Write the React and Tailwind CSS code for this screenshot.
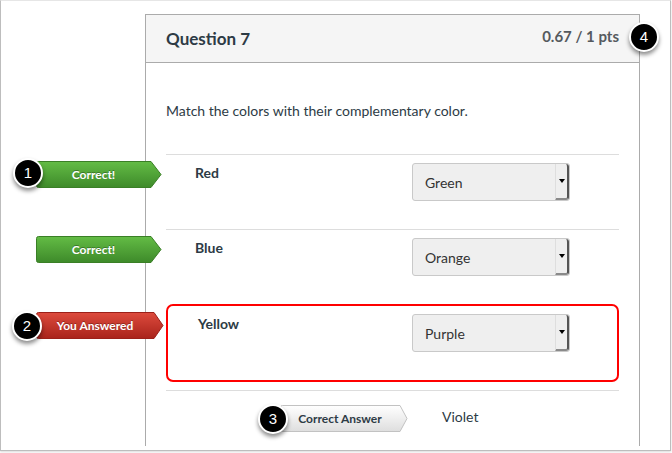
import React from "react";

// Callout number bubble
function Bubble({ n, className }) {
  return (
    <div
      className={
        "absolute w-[30px] h-[30px] rounded-full bg-black border-2 border-white shadow-[0_3px_4px_rgba(0,0,0,0.45)] flex items-center justify-center text-white text-[15px] font-['Liberation_Sans',sans-serif] " +
        className
      }
    >
      {n}
    </div>
  );
}

// Arrow-shaped tag drawn as svg, label on top
function Tag({ id, width, body, top, bottom, stroke, label, textColor, className, textClass }) {
  return (
    <div className={"absolute h-[27px] " + className} style={{ width }}>
      <svg width={width} height="27" className="absolute left-0 top-0">
        <defs>
          <linearGradient id={id} x1="0" y1="0" x2="0" y2="1">
            <stop offset="0" stopColor={top} />
            <stop offset="1" stopColor={bottom} />
          </linearGradient>
        </defs>
        <path
          d={`M0.5 2.5 Q0.5 0.5 2.5 0.5 H${body} L${width - 1} 13.5 L${body} 26.5 H2.5 Q0.5 26.5 0.5 24.5 Z`}
          fill={`url(#${id})`}
          stroke={stroke}
        />
      </svg>
      <div
        className={"relative flex items-center justify-center h-[27px] text-[12px] font-bold " + textClass}
        style={{ width: body, color: textColor }}
      >
        {label}
      </div>
    </div>
  );
}

function Select({ value }) {
  return (
    <div className="flex w-[158px] h-[38px] rounded-[3px] border border-[#c9c9c9] bg-[#efefef]">
      <div className="flex-1 flex items-center pl-[12px] text-[14px] text-[#333]">{value}</div>
      <div className="w-[14px] flex items-center justify-center border-l border-l-[#dedede] border-r-2 border-r-[#555] border-b-2 border-b-[#8a8a8a] rounded-r-[3px]">
        <div className="w-0 h-0 border-l-[3px] border-r-[3px] border-t-[4px] border-l-transparent border-r-transparent border-t-black"></div>
      </div>
    </div>
  );
}

function AnswerRow({ label, value }) {
  return (
    <div className="h-[75px] border-t border-[#dddddd] pt-[8px] grid grid-cols-[246px_158px]">
      <div className="pl-[29px] leading-[20px] text-[14px] font-bold text-[#2d3b45]">{label}</div>
      <Select value={value} />
    </div>
  );
}

export default function App() {
  return (
    <div className="relative w-[672px] h-[453px] overflow-hidden bg-white font-['Lato',sans-serif]">
      <div className="w-[671px] h-[451px] border border-[#bdbdbd] border-t-[#e6e6e6] shadow-[0_1px_2px_rgba(0,0,0,0.15)]">
        <div className="ml-[144px] mt-[13px] w-[495px] h-[432px] border-x border-t border-[#ababab] overflow-hidden">
          <div className="h-[48px] bg-[#f5f5f5] border-b border-[#ababab] flex items-center justify-between px-[20px]">
            <div className="text-[17px] font-bold text-[#2d3b45]">Question 7</div>
            <div className="text-[15px] font-bold text-[#555a5e] -mt-[4px]">0.67 / 1 pts</div>
          </div>
          <div className="px-[20px]">
            <div className="pt-[38px] pb-[33px] text-[14px] leading-[20px] text-[#2d3b45]">
              Match the colors with their complementary color.
            </div>
            <AnswerRow label="Red" value="Green" />
            <AnswerRow label="Blue" value="Orange" />
            <div className="h-[78px] border-2 border-[#ff0000] rounded-[7px] pt-[8px] grid grid-cols-[244px_158px]">
              <div className="pl-[30px] leading-[20px] text-[14px] font-bold text-[#2d3b45]">Yellow</div>
              <Select value="Purple" />
            </div>
            <div className="mt-[8px] border-t border-[#dddddd] pt-[16px] pl-[276px] text-[14px] leading-[20px] text-[#2d3b45]">
              Violet
            </div>
          </div>
        </div>
      </div>

      <Tag id="g1" width={126} body={115} top="#63bc45" bottom="#3e8a2a" stroke="#3a7f26" label="Correct!" textColor="#fff" className="left-[36px] top-[161px]" textClass="[text-shadow:0_-1px_0_rgba(0,0,0,0.3)]" />
      <Tag id="g2" width={126} body={115} top="#63bc45" bottom="#3e8a2a" stroke="#3a7f26" label="Correct!" textColor="#fff" className="left-[36px] top-[236px]" textClass="[text-shadow:0_-1px_0_rgba(0,0,0,0.3)]" />
      <Tag id="r1" width={128} body={118} top="#dd4b3d" bottom="#a9231b" stroke="#9c2019" label="You Answered" textColor="#fff" className="left-[36px] top-[312px]" textClass="[text-shadow:0_-1px_0_rgba(0,0,0,0.3)]" />
      <Tag id="c1" width={128} body={120} top="#ffffff" bottom="#dedede" stroke="#c2c2c2" label="Correct Answer" textColor="#2d3b45" className="left-[280px] top-[405px]" textClass="" />

      <Bubble n="1" className="left-[13px] top-[158px]" />
      <Bubble n="2" className="left-[12px] top-[311px]" />
      <Bubble n="3" className="left-[258px] top-[404px]" />
      <Bubble n="4" className="left-[629px] top-[22px]" />
    </div>
  );
}
